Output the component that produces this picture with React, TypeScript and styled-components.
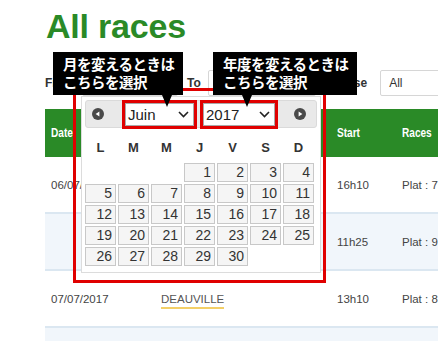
import React from 'react';
import styled, { createGlobalStyle } from 'styled-components';

const GlobalStyle = createGlobalStyle`
  html, body {
    margin: 0;
    padding: 0;
    background: #fff;
    overflow: hidden;
  }
  body {
    font-family: "Liberation Sans", Arial, sans-serif;
    color: #333;
  }
`;

const GREEN = '#2a8a27';
const RED = '#e00000';

const weekDays = ['L', 'M', 'M', 'J', 'V', 'S', 'D'];

const rows = [
    { date: '06/07/2017', course: 'CHANTILLY', start: '16h10', races: 'Plat : 7', alt: false },
    { date: '', course: 'VICHY', start: '11h25', races: 'Plat : 9', alt: true },
    { date: '07/07/2017', course: 'DEAUVILLE', start: '13h10', races: 'Plat : 8', alt: false },
    { date: '', course: '', start: '', races: '', alt: true },
];

const PrevIcon = ({ flip }: { flip?: boolean }) => (
    <svg width="12" height="12" viewBox="0 0 12 12" style={flip ? { transform: 'scaleX(-1)' } : undefined}>
        <circle cx="6" cy="6" r="6" fill="#4a4a4a" />
        <path d="M3.6 6 L7.4 3.4 L7.4 8.6 Z" fill="#fff" />
    </svg>
);

const Chevron = () => (
    <svg width="11" height="7" viewBox="0 0 11 7">
        <path d="M1 1 L5.5 5.5 L10 1" fill="none" stroke="#222" strokeWidth="1.6" />
    </svg>
);

const App: React.FC = () => {
    const days: (number | null)[] = [null, null, null];
    for (let d = 1; d <= 30; d++) days.push(d);

    return (
        <Page>
            <GlobalStyle />
            <Title>All races</Title>

            <FilterRow>
                <Label $gap={7}>From</Label>
                <Input $width={96} />
                <Label $gap={7} $lead={9}>To</Label>
                <Input $width={108} />
                <Label $gap={13} $lead={10}>Course</Label>
                <Input $width={120}>All</Input>
            </FilterRow>

            <Table>
                <HeadRow>
                    <HeadCell>Date</HeadCell>
                    <HeadCell>Hippodrome</HeadCell>
                    <HeadCell>Start</HeadCell>
                    <HeadCell>Races</HeadCell>
                </HeadRow>
                {rows.map((r, i) => (
                    <Row key={i} $alt={r.alt}>
                        <Cell>{r.date}</Cell>
                        <Cell>{r.course && <Course>{r.course}</Course>}</Cell>
                        <Cell>{r.start}</Cell>
                        <Cell>{r.races}</Cell>
                    </Row>
                ))}
            </Table>

            <Popup>
                <CalHeader>
                    <PrevIcon />
                    <Selects>
                        <FakeSelect $width={69}>
                            Juin
                            <Chevron />
                        </FakeSelect>
                        <FakeSelect $width={72}>
                            2017
                            <Chevron />
                        </FakeSelect>
                    </Selects>
                    <PrevIcon flip />
                </CalHeader>
                <WeekRow>
                    {weekDays.map((d, i) => (
                        <WeekDay key={i}>{d}</WeekDay>
                    ))}
                </WeekRow>
                <DayGrid>
                    {days.map((d, i) => (d ? <Day key={i}>{d}</Day> : <span key={i} />))}
                </DayGrid>
            </Popup>

            <RedFrame />

            <Tooltip $left={53} $width={130} $arrow={114}>
                月を変えるときは
                <br />
                こちらを選択
            </Tooltip>
            <Tooltip $left={213} $width={144} $arrow={34}>
                年度を変えるときは
                <br />
                こちらを選択
            </Tooltip>
        </Page>
    );
};
export default App;

const Page = styled.div`
    position: relative;
    width: 438px;
    height: 341px;
    overflow: hidden;
    padding-left: 45px;
    box-sizing: border-box;
`;

const Title = styled.h1`
    margin: 0 0 0 1px;
    padding-top: 7px;
    font-size: 34px;
    line-height: 39px;
    font-weight: 700;
    color: ${GREEN};
    letter-spacing: -0.2px;
`;

const FilterRow = styled.div`
    display: flex;
    align-items: center;
    height: 26px;
    margin-top: 24px;
    white-space: nowrap;
`;

const Label = styled.span<{ $gap: number; $lead?: number }>`
    font-size: 12px;
    font-weight: 700;
    color: #333;
    margin-right: ${(p) => p.$gap}px;
    margin-left: ${(p) => p.$lead ?? 0}px;
`;

const Input = styled.div<{ $width: number }>`
    flex-shrink: 0;
    width: ${(p) => p.$width}px;
    height: 26px;
    box-sizing: border-box;
    border: 1px solid #d6d6d6;
    border-radius: 2px;
    background: #fff;
    display: flex;
    align-items: center;
    padding-left: 8px;
    font-size: 12px;
    color: #333;
`;

const Table = styled.div`
    margin-top: 13px;
    width: 520px;
`;

const HeadRow = styled.div`
    display: grid;
    grid-template-columns: 110px 176px 65px 1fr;
    height: 48px;
    align-items: center;
    background: ${GREEN};
`;

const HeadCell = styled.div`
    padding-left: 6px;
    font-size: 12px;
    font-weight: 700;
    color: #fff;
    transform: scaleX(0.84);
    transform-origin: 6px 50%;
    white-space: nowrap;
`;

const Row = styled.div<{ $alt: boolean }>`
    display: grid;
    grid-template-columns: 110px 176px 65px 1fr;
    height: 57px;
    box-sizing: border-box;
    align-items: center;
    background: ${(p) => (p.$alt ? '#f1f6fb' : '#fff')};
    border-bottom: 2px solid #dbe7f1;
`;

const Cell = styled.div`
    padding-left: 6px;
    font-size: 11.5px;
    color: #444;
    white-space: nowrap;
`;

const Course = styled.span`
    color: #555;
    padding-bottom: 2px;
    border-bottom: 2px solid #f3cf67;
`;

const Popup = styled.div`
    position: absolute;
    left: 81px;
    top: 96px;
    width: 240px;
    height: 177px;
    box-sizing: border-box;
    padding: 3px;
    background: #fff;
    border: 1px solid #dcdcdc;
`;

const CalHeader = styled.div`
    display: flex;
    align-items: center;
    height: 28px;
    box-sizing: border-box;
    padding: 0 10px 0 6px;
    background: #e9e9e9;
    border: 1px solid #dadada;
    border-radius: 3px;
`;

const Selects = styled.div`
    display: flex;
    gap: 9px;
    margin: 0 19px 0 21px;
`;

const FakeSelect = styled.div<{ $width: number }>`
    width: ${(p) => p.$width}px;
    height: 23px;
    box-sizing: border-box;
    display: flex;
    align-items: center;
    justify-content: space-between;
    padding: 0 4px 0 2px;
    background: #fff;
    border: 1px solid #a9a9a9;
    outline: 3px solid ${RED};
    font-size: 15px;
    color: #222;
`;

const WeekRow = styled.div`
    display: grid;
    grid-template-columns: repeat(7, 31px);
    column-gap: 2px;
    height: 35px;
    padding-top: 3px;
    box-sizing: border-box;
    align-items: center;
`;

const WeekDay = styled.div`
    text-align: center;
    font-size: 13px;
    font-weight: 700;
    color: #333;
`;

const DayGrid = styled.div`
    display: grid;
    grid-template-columns: repeat(7, 31px);
    grid-auto-rows: 19px;
    gap: 2px;
`;

const Day = styled.div`
    box-sizing: border-box;
    border: 1px solid #c8c8c8;
    background: #f5f5f5;
    text-align: right;
    padding-right: 3px;
    font-size: 14px;
    line-height: 17px;
    color: #333;
`;

const RedFrame = styled.div`
    position: absolute;
    left: 73px;
    top: 88px;
    width: 253px;
    height: 195px;
    box-sizing: border-box;
    border: 3px solid ${RED};
`;

const Tooltip = styled.div<{ $left: number; $width: number; $arrow: number }>`
    position: absolute;
    top: 52px;
    left: ${(p) => p.$left}px;
    width: ${(p) => p.$width}px;
    height: 43px;
    box-sizing: border-box;
    padding: 3px 0 0 10px;
    background: #000;
    color: #fff;
    font-family: "Noto Sans CJK JP", "Noto Sans", sans-serif;
    font-size: 14.5px;
    font-weight: 700;
    line-height: 18px;
    letter-spacing: -0.5px;
    white-space: nowrap;

    &::after {
        content: '';
        position: absolute;
        top: 100%;
        left: ${(p) => p.$arrow - 5}px;
        border-left: 5px solid transparent;
        border-right: 5px solid transparent;
        border-top: 12px solid #000;
    }
`;
